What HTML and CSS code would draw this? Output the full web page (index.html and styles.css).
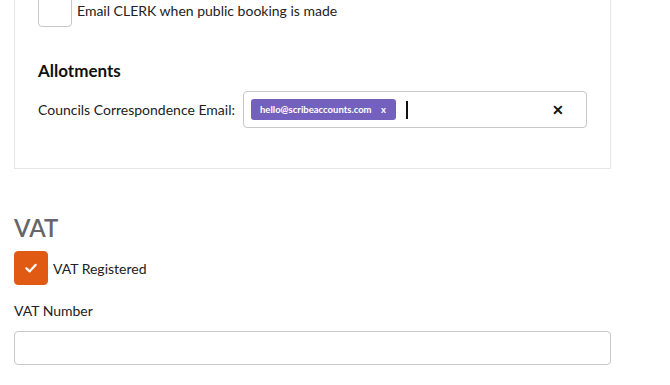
FILE: index.html
```html
<!DOCTYPE html>
<html>
<head>
    <title>Settings</title>
    <link rel="stylesheet" href="styles.css">
</head>
<body>
    <div class="page">
        <div class="card">
            <label class="check-row">
                <span class="checkbox"></span>
                <span class="check-text">Email CLERK when public booking is made</span>
            </label>

            <h3 class="card-title">Allotments</h3>
            <div class="field-row">
                <span class="field-label">Councils Correspondence Email:</span>
                <div class="tag-input">
                    <span class="chip">hello@scribeaccounts.com <span class="chip-x">x</span></span>
                    <span class="caret"></span>
                    <span class="clear">&#x2715;</span>
                </div>
            </div>
        </div>

        <h2 class="section-title">VAT</h2>
        <label class="check-row">
            <span class="checkbox checked">
                <svg width="14" height="14" viewBox="0 0 14 14">
                    <path d="M2.3 7.3 L5.6 10.4 L11.7 3.8" fill="none" stroke="#fff" stroke-width="2.2" stroke-linecap="round" stroke-linejoin="round"/>
                </svg>
            </span>
            <span class="check-text">VAT Registered</span>
        </label>

        <div class="input-label">VAT Number</div>
        <input class="text-input" type="text">
    </div>
</body>
</html>
```

FILE: styles.css
```css
body {
    margin: 0;
    background-color: #fff;
    font-family: Lato, "Noto Sans", sans-serif;
    font-size: 14px;
    color: #222;
}
.page {
    width: 597px;
    margin-top: -29px;
    padding-left: 14px;
}
.card {
    border: 1px solid #e6e6e6;
    padding: 21px 23px 40px 23px;
}
.check-row {
    display: flex;
    align-items: center;
    gap: 5px;
}
.checkbox {
    width: 32px;
    height: 32px;
    border: 1px solid #c8c8c8;
    border-radius: 4px;
    background-color: #fff;
    display: flex;
    justify-content: center;
    align-items: center;
}
.checkbox.checked {
    background-color: #e05a14;
    border-color: #e05a14;
}
.check-text {
    font-size: 14px;
    color: #222;
}
.card-title {
    margin: 33px 0 0 0;
    font-size: 17px;
    font-weight: bold;
    color: #111;
}
.field-row {
    display: flex;
    align-items: center;
    gap: 8px;
    margin-top: 10px;
}
.field-label {
    font-size: 14px;
}
.tag-input {
    width: 335px;
    height: 35px;
    border: 1px solid #c8c8c8;
    border-radius: 4px;
    display: flex;
    align-items: center;
    padding: 0 0 0 7px;
}
.chip {
    background-color: #7361bd;
    color: #fff;
    font-size: 9.5px;
    font-weight: bold;
    border-radius: 3px;
    padding: 4px 10px 4px 9px;
    line-height: 13px;
}
.chip-x {
    margin-left: 7px;
}
.caret {
    width: 2px;
    height: 18px;
    background-color: #111;
    margin-left: 10px;
}
.clear {
    margin-left: auto;
    margin-right: 22px;
    font-size: 14px;
    font-weight: bold;
    color: #111;
}
.section-title {
    margin: 44px 0 9px 0;
    font-size: 24px;
    font-weight: 600;
    color: #666;
}
.input-label {
    margin-top: 17px;
    font-size: 14px;
}
.text-input {
    display: block;
    box-sizing: border-box;
    width: 597px;
    height: 34px;
    margin-top: 12px;
    border: 1px solid #c8c8c8;
    border-radius: 4px;
}
```
